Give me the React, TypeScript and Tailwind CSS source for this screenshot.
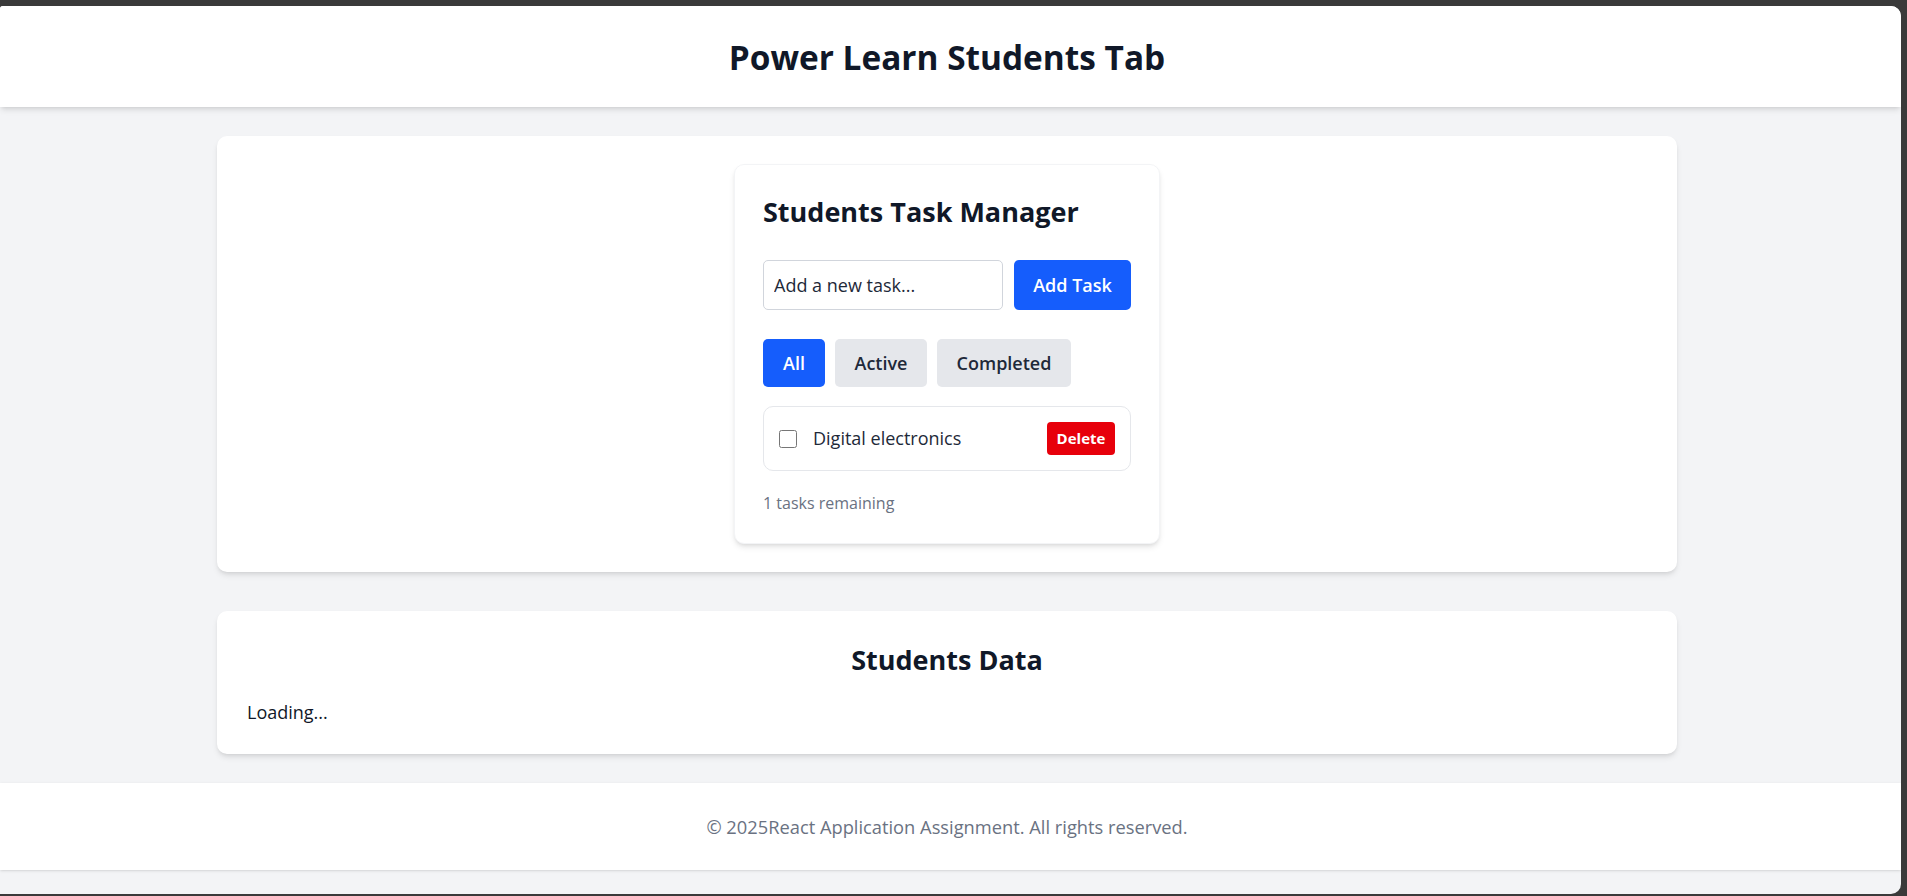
import { useState } from 'react';

interface Task {
  id: number;
  text: string;
  completed: boolean;
}

type Filter = 'all' | 'active' | 'completed';

function TaskManager() {
  const [tasks, setTasks] = useState<Task[]>([
    { id: 1, text: 'Digital electronics', completed: false },
  ]);
  const [input, setInput] = useState('');
  const [filter, setFilter] = useState<Filter>('all');

  const addTask = () => {
    if (!input.trim()) return;
    setTasks([...tasks, { id: Date.now(), text: input.trim(), completed: false }]);
    setInput('');
  };

  const visible = tasks.filter((t) =>
    filter === 'all' ? true : filter === 'active' ? !t.completed : t.completed
  );
  const remaining = tasks.filter((t) => !t.completed).length;

  const filterBtn = (key: Filter, label: string, width: string) => (
    <button
      key={key}
      onClick={() => setFilter(key)}
      className={`${width} h-[48px] rounded-[5px] text-[18px] font-semibold ${
        filter === key ? 'bg-blue-600 text-white' : 'bg-gray-200 text-gray-800'
      }`}
    >
      {label}
    </button>
  );

  return (
    <div className="w-[426px] bg-white rounded-[10px] border border-gray-100 shadow-md px-[28px] pt-[29px] pb-[28px]">
      <h2 className="text-[27px] leading-[36px] font-bold text-gray-900 mb-[30px]">Students Task Manager</h2>

      <div className="flex gap-[11px] mb-[29px]">
        <input
          value={input}
          onChange={(e) => setInput(e.target.value)}
          placeholder="Add a new task..."
          className="w-[240px] h-[50px] border border-gray-300 rounded-[5px] px-[10px] text-[18px] text-gray-800 placeholder:text-gray-800 outline-none"
        />
        <button
          onClick={addTask}
          className="w-[117px] h-[50px] bg-blue-600 text-white rounded-[5px] text-[18px] font-semibold"
        >
          Add Task
        </button>
      </div>

      <div className="flex gap-[10px] mb-[19px]">
        {filterBtn('all', 'All', 'w-[62px]')}
        {filterBtn('active', 'Active', 'w-[92px]')}
        {filterBtn('completed', 'Completed', 'w-[134px]')}
      </div>

      <ul className="flex flex-col gap-[10px]">
        {visible.map((task) => (
          <li
            key={task.id}
            className="h-[65px] flex items-center justify-between border border-gray-200 rounded-[10px] px-[15px]"
          >
            <div className="flex items-center gap-[16px]">
              <input
                type="checkbox"
                checked={task.completed}
                onChange={() =>
                  setTasks(tasks.map((t) => (t.id === task.id ? { ...t, completed: !t.completed } : t)))
                }
                className="w-[18px] h-[18px] m-0"
              />
              <span className={`text-[18px] text-gray-800 ${task.completed ? 'line-through text-gray-400' : ''}`}>
                {task.text}
              </span>
            </div>
            <button
              onClick={() => setTasks(tasks.filter((t) => t.id !== task.id))}
              className="w-[68px] h-[33px] bg-red-600 text-white rounded-[4px] text-[15px] font-bold"
            >
              Delete
            </button>
          </li>
        ))}
      </ul>

      <p className="mt-[20px] text-[16px] leading-[24px] text-gray-500">{remaining} tasks remaining</p>
    </div>
  );
}

export default function App() {
  return (
    <div
      className="h-screen w-full bg-[#3a3a3a] pt-[6px] pr-[6px] pb-[2px]"
      style={{ fontFamily: '"Open Sans", "Noto Sans", sans-serif' }}
    >
      <div className="h-full flex flex-col bg-gray-100 rounded-tl-[3px] rounded-tr-[10px] rounded-br-[10px] overflow-hidden">
        <header className="h-[101px] shrink-0 bg-white shadow-md flex items-center justify-center pr-[7px] pt-[2px]">
          <h1 className="text-[33.4px] font-bold text-gray-900">Power Learn Students Tab</h1>
        </header>

        <main className="flex flex-col items-center gap-[39px] pt-[29px] pb-[29px] pr-[7px]">
          <section className="w-[1460px] bg-white rounded-[10px] shadow-md p-[28px] flex justify-center">
            <TaskManager />
          </section>

          <section className="w-[1460px] bg-white rounded-[10px] shadow-md px-[30px] pt-[31px] pb-[28px]">
            <h2 className="text-[27px] leading-[36px] font-bold text-gray-900 text-center mb-[21px]">Students Data</h2>
            <p className="text-[18px] leading-[27px] text-gray-900">Loading...</p>
          </section>
        </main>

        <footer className="h-[87px] shrink-0 bg-white shadow-sm flex items-center justify-center pr-[7px]">
          <p className="text-[18.3px] text-gray-500">© 2025React Application Assignment. All rights reserved.</p>
        </footer>
      </div>
    </div>
  );
}
